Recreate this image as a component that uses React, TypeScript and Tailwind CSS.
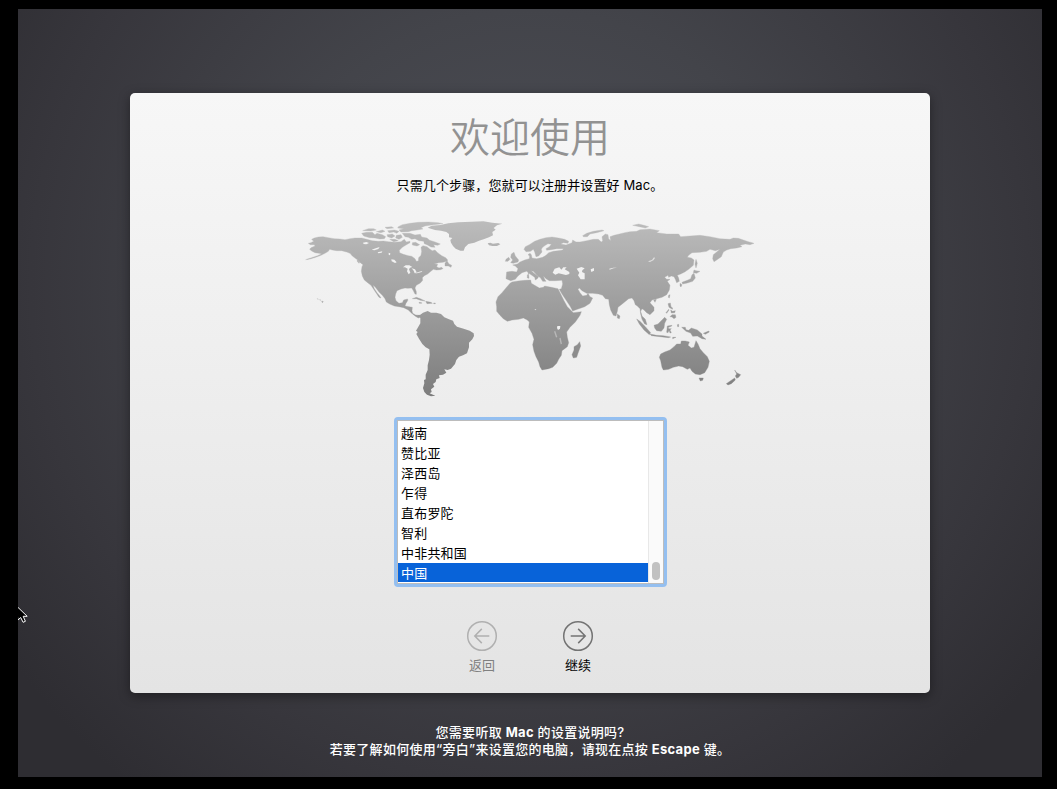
const countries = ['越南', '赞比亚', '泽西岛', '乍得', '直布罗陀', '智利', '中非共和国', '中国'];

function WorldMap() {
  return (
    <svg className="block h-[190px] w-[460px]" viewBox="300 214 460 190" aria-label="世界地图">
      <defs>
        <linearGradient id="land" gradientUnits="userSpaceOnUse" x1="0" y1="220" x2="0" y2="396">
          <stop offset="0" stopColor="#bcbcbc" />
          <stop offset="1" stopColor="#7d7d7d" />
        </linearGradient>
        <mask id="continents" maskUnits="userSpaceOnUse" x="300" y="214" width="460" height="190">
          {/* North America */}
          <g transform="translate(295 210) scale(.33333)" fill="#fff" stroke="#fff" strokeWidth="1">
            <path d="M40,100 48,98 56,94 50,88 58,84 70,81 84,80 100,83 118,86 135,87 150,89 165,86 180,84 200,84 215,88 232,92 250,94 265,93 280,95 300,97 318,95 328,88 334,96 345,94 345,98 333,105 322,112 313,121 314,128 325,133 340,137 350,139 360,146 364,154 370,153 371,143 378,136 380,124 378,112 384,107 396,110 405,118 412,122 420,120 428,128 440,137 452,143 458,150 456,154 444,157 430,158 418,162 428,163 425,170 432,174 440,172 444,176 436,179 424,180 415,178 405,186 398,192 388,197 382,203 383,211 376,219 364,226 360,234 364,245 364,253 360,252 354,240 350,234 338,235 330,234 318,237 306,242 302,252 300,262 303,272 312,280 322,278 326,270 338,267 338,272 333,280 330,288 342,290 352,292 351,302 353,310 362,315 372,316 378,320 370,324 360,318 348,308 340,300 326,293 312,290 298,288 284,282 274,276 270,266 262,256 252,246 240,230 234,226 238,236 246,248 254,258 258,264 252,262 244,250 236,238 228,226 218,218 208,210 202,198 199,184 201,170 204,164 196,158 188,150 180,144 172,138 165,130 155,126 140,122 125,122 112,120 104,118 100,124 90,130 78,136 62,142 45,147 32,149 50,143 68,137 80,131 72,130 60,128 50,123 44,118 48,113 60,108 58,104 46,104Z" />
            <path d="M200,70 215,67 232,67 240,74 246,70 262,74 272,80 268,86 254,87 240,84 224,83 206,78Z M203,62 220,56 236,56 244,60 228,63Z M244,65 262,60 270,64 258,68Z M270,52 290,50 296,54 276,56Z M278,62 298,60 312,64 306,70 296,66 282,68Z M276,74 292,72 300,78 290,84 278,80Z M304,76 318,74 322,82 312,88 302,84Z M284,88 300,88 310,92 296,95Z M310,50 322,44 345,40 370,37 400,36 430,38 444,41 415,44 390,48 378,53 384,57 366,60 350,62 340,65 318,66 312,60 326,56 308,54Z" />
            <path d="M322,70 345,70 360,75 376,73 380,81 396,84 404,91 418,95 436,102 428,106 416,104 420,112 408,111 396,104 388,101 386,94 372,92 360,86 350,88 340,82 330,80Z M352,98 362,97 374,104 366,108 352,105Z M450,160 456,152 462,162 470,166 468,172 460,168 450,168Z M352,266 364,262 376,266 390,273 376,271 364,266Z M392,274 408,277 412,280 396,281Z M416,279 421,279 421,281 416,281Z M372,277 380,278 380,280 373,280Z M80,273 85,275 82,278Z M67,266 70,267 69,268Z M74,269 77,270 75,271Z M188,150 194,158 192,160 186,153Z" />
            <g fill="#000" stroke="none">
              <path d="M324,172 332,166 343,166 352,171 345,173 342,178 346,188 341,193 336,184 338,176 330,172Z M350,175 360,178 365,187 359,190 356,182Z M360,190 373,185 382,183 380,186 366,190Z M204,98 214,96 222,99 214,103 206,102Z M230,119 242,115 254,111 250,117 238,121Z M248,127 262,124 260,128 250,130Z M281,128 286,130 285,136 281,134Z M289,148 298,149 305,157 300,159 290,154Z" />
            </g>
          </g>
          {/* Greenland and Iceland */}
          <g transform="translate(405 210) scale(.33333)" fill="#fff">
            <path d="M68,53 80,47 106,45 130,40 160,37 200,35 235,34 262,38 292,41 276,46 266,54 272,59 262,66 264,76 252,82 236,88 222,92 208,98 190,102 180,112 176,122 166,122 152,116 144,108 138,98 136,90 142,84 132,82 132,72 124,66 108,62 90,60Z M248,100 256,98 264,101 280,99 286,103 276,108 262,108 252,106Z" />
          </g>
          {/* South America */}
          <g transform="translate(395 300) scale(.33333)" fill="#fff">
            <path d="M68,46 76,44 84,38 98,33 108,38 124,38 138,42 148,52 162,58 174,62 178,72 186,80 206,86 224,92 236,100 237,108 232,118 222,128 222,142 216,160 204,166 192,170 184,180 180,192 168,206 158,210 148,208 154,218 144,224 132,226 134,234 124,238 122,246 114,252 118,260 108,268 110,276 104,280 114,284 121,287 108,289 96,284 88,276 84,264 88,250 87,240 92,238 92,224 98,210 98,196 102,180 104,164 103,148 92,142 82,132 72,116 64,102 68,96 63,92 70,80 76,70 76,54Z" />
          </g>
          {/* Africa, Europe, Asia */}
          <g transform="translate(490 210) scale(.33333)" fill="#fff" stroke="#fff" strokeWidth="1">
            <path d="M60,220 66,216 84,213 104,211 122,210 124,220 134,226 148,234 160,232 164,228 184,232 204,236 212,252 222,272 232,290 244,302 250,308 274,305 270,316 256,336 240,352 230,366 232,382 236,398 232,410 216,422 214,436 206,448 200,460 188,472 176,476 156,480 150,470 146,456 138,440 132,424 128,404 132,388 126,370 116,352 118,336 112,330 100,324 86,328 66,330 52,334 40,326 30,316 20,304 20,290 18,276 24,260 36,248 46,236Z M269,395 272,408 264,430 260,442 250,444 246,434 252,420 252,410 262,404Z" />
            <path d="M50,186 66,184 80,186 84,176 76,168 68,165 82,162 90,156 104,150 118,146 119,138 114,134 120,130 124,134 126,144 140,146 158,142 168,136 176,128 190,124 204,122 218,120 220,116 200,116 184,119 170,121 168,116 178,110 184,103 174,101 166,106 158,112 154,118 156,126 146,138 138,140 134,126 130,118 122,124 108,125 102,118 106,110 118,104 134,94 150,88 168,83 186,81 206,84 224,88 236,94 234,100 220,98 212,102 228,105 246,98 248,90 258,96 270,96 290,92 310,88 325,88 334,96 338,92 336,80 346,72 354,74 356,86 362,92 360,80 372,76 388,72 404,68 420,65 440,64 450,59 480,57 508,62 500,68 530,72 566,72 572,80 600,78 630,76 660,80 690,86 720,88 730,84 745,85 760,90 775,95 792,100 780,104 766,102 750,106 756,110 740,114 722,116 710,120 700,126 694,140 680,150 672,155 668,146 670,134 680,126 690,118 676,122 660,118 650,124 630,127 606,128 596,136 592,142 604,144 612,150 610,166 596,178 584,186 572,192 562,196 566,204 568,214 560,218 556,208 552,200 544,198 536,202 534,196 524,202 530,208 540,208 532,214 540,226 538,240 530,254 516,262 500,266 486,270 480,278 492,292 492,302 480,314 470,308 462,300 456,296 452,304 456,318 466,328 471,344 464,342 456,328 452,312 450,296 442,288 436,284 432,272 426,264 416,266 404,276 394,284 384,292 382,304 378,318 370,316 362,300 358,284 356,268 346,266 338,256 326,252 308,250 290,250 276,242 268,234 264,238 270,248 278,258 290,256 294,250 300,260 308,264 300,280 284,290 262,298 248,303 240,288 228,270 216,252 208,238 214,236 218,222 216,211 196,212 178,212 168,206 160,198 164,208 168,214 158,214 152,204 140,195 130,184 124,182 132,190 146,200 142,206 136,210 134,202 120,192 110,184 96,188 84,198 76,208 62,212 48,206 49,196Z" />
            <path d="M64,132 72,127 76,138 86,150 84,156 70,160 62,158 68,150 62,142Z M48,148 56,142 60,148 54,154 46,154Z M278,77 290,70 310,64 336,60 342,62 320,68 300,72 292,80 280,80Z M428,46 446,42 462,46 476,50 466,54 448,50Z M618,148 622,160 618,174 615,162Z M612,180 618,182 630,184 620,190 610,188Z M612,190 616,204 608,214 592,219 578,222 576,217 594,210 602,206 606,194Z M570,220 576,224 573,231 570,228Z M536,256 540,254 538,264 535,262Z M491,270 499,268 495,277Z M382,312 390,318 388,326 382,324Z M112,194 116,194 117,205 112,204Z M114,187 118,188 116,194Z" />
            <path d="M440,327 450,334 466,350 482,368 478,374 462,360 448,342Z M480,372 500,376 520,377 542,381 535,383 510,380 484,377Z M492,346 504,342 516,330 524,322 530,328 524,340 522,354 514,364 500,362 494,354Z M532,348 546,346 544,349 535,352 536,356 544,356 540,360 544,368 540,369 537,361 534,368 530,367Z M534,281 541,279 543,290 548,294 547,298 537,292Z M542,300 548,304 556,302 554,308 544,309Z M540,320 546,314 556,314 558,322 552,326 546,321Z M528,308 536,298 537,300 530,310Z M562,344 566,343 566,350 563,350Z M548,382 558,382 548,386Z" />
            <g fill="#000" stroke="none">
              <path d="M188,188 194,176 208,172 214,179 220,172 230,172 224,178 238,186 238,192 228,195 206,190 196,194Z M260,176 274,171 284,175 277,181 276,186 284,190 284,208 272,208 264,196 268,188Z M302,178 312,174 312,182 304,186Z M358,176 370,173 381,173 370,175 359,179Z M202,348 211,348 210,356 204,360 201,354Z" />
              <path d="M474,154 486,150 492,142 495,144 490,151 480,156Z M133,297 139,297 137,301Z" fill="#444" />
              <path d="M194,364 L200,382 M210,384 L214,402" stroke="#999" strokeWidth="4" />
            </g>
          </g>
          {/* Oceania */}
          <g transform="translate(620 290) scale(.33333)" fill="#fff" stroke="#fff" strokeWidth="1">
            <path d="M122,192 134,186 150,180 162,170 170,162 182,162 184,153 196,153 208,156 204,166 214,174 222,172 228,152 234,162 240,176 250,188 262,200 268,214 264,232 254,248 240,254 226,252 216,244 210,234 202,238 188,230 176,228 160,232 146,238 130,240 126,232 122,212 118,202Z M237,264 250,264 248,271 241,273Z M344,240 350,248 362,254 356,262 350,265 346,258 350,252Z M344,264 346,270 334,281 324,285 319,281 332,272Z M185,112 196,112 198,119 206,121 214,114 232,120 246,132 246,138 258,148 246,146 232,138 218,139 212,129 198,124Z M250,130 266,123 268,126 256,133Z" />
          </g>
        </mask>
      </defs>
      <rect x="300" y="214" width="460" height="190" fill="url(#land)" mask="url(#continents)" />
    </svg>
  );
}

function NavButton({ label, forward = false }: { label: string; forward?: boolean }) {
  return (
    <button
      disabled={!forward}
      className={`flex w-8 flex-col items-center ${forward ? 'text-black' : 'text-[#808080]'}`}
    >
      <svg
        className={`size-8 ${forward ? 'text-[#737373]' : 'text-[#b0b0b0]'}`}
        viewBox="0 0 32 32"
        fill="none"
        stroke="currentColor"
        strokeWidth="1.5"
      >
        <circle cx="16" cy="16" r="14.3" />
        <path d={forward ? 'M8.7 16H23M16.2 8.9 23.2 16l-7 7.1' : 'M23.3 16H9M15.8 8.9 8.8 16l7 7.1'} />
      </svg>
      <span className="mt-[3px] text-[13px] leading-5 whitespace-nowrap">{label}</span>
    </button>
  );
}

export default function App() {
  return (
    <div className="h-[789px] w-[1057px] overflow-hidden bg-black pt-[9px] pl-[18px] font-['Inter','Noto_Sans_CJK_SC',sans-serif]">
      <main className="relative flex h-[768px] w-[1024px] flex-col items-center overflow-hidden bg-[radial-gradient(circle_640px_at_50%_36%,#4e5058_0%,#43444a_43%,#37363c_78%,#2e2d32_100%)] pt-[84px]">
        <section className="flex h-[600px] w-[800px] flex-col items-center rounded-[5px] bg-linear-to-b from-[#f7f7f7] to-[#e4e4e4] shadow-[0_3px_12px_rgba(0,0,0,0.4)]">
          <h1 className="mt-[15px] text-[40px] leading-[60px] font-[350] text-[#929292]">欢迎使用</h1>
          <p className="mt-[7px] text-[13px] leading-5 tracking-[0.12px] text-black">
            只需几个步骤，您就可以注册并设置好 Mac。
          </p>
          <div className="mt-[19px]">
            <WorldMap />
          </div>
          <div className="mt-[13px] flex h-[170px] w-[273px] rounded-[4px] border-[3px] border-[#94bff0]">
            <div className="flex w-full border border-[#bcbcbc] bg-white">
              <ul className="w-[250px] pt-[2px] text-[13px] leading-5 tracking-[0.2px] text-black">
                {countries.map((name) => (
                  <li
                    key={name}
                    className={`pl-[3.5px] ${name === '中国' ? 'h-[19px] bg-[#0863d9] text-white' : 'h-5'}`}
                  >
                    {name}
                  </li>
                ))}
              </ul>
              <div className="flex flex-1 items-end justify-center border-l border-[#e8e8e8] bg-[#fafafa] pb-[3px]">
                <div className="h-[18px] w-2 rounded-full bg-[#c1c1c1]" />
              </div>
            </div>
          </div>
          <nav className="mt-[33px] flex gap-16">
            <NavButton label="返回" />
            <NavButton label="继续" forward />
          </nav>
        </section>
        <p className="mt-[31px] text-center text-[13px] leading-[17px] font-medium tracking-[0.28px] whitespace-nowrap text-white">
          您需要听取 <span className="font-bold">Mac</span> 的设置说明吗?
          <br />
          若要了解如何使用“旁白”来设置您的电脑，请现在点按 <span className="font-bold">Escape</span> 键。
        </p>
        <svg className="absolute top-[595px] left-0 h-5 w-3" viewBox="0 0 12 20">
          <path
            d="M-2 1.5 9.2 12.3H5.2l2.2 5-2.3 1-2.4-4.8L0 16Z"
            fill="#000"
            stroke="#fff"
            strokeWidth="1"
          />
        </svg>
      </main>
    </div>
  );
}
